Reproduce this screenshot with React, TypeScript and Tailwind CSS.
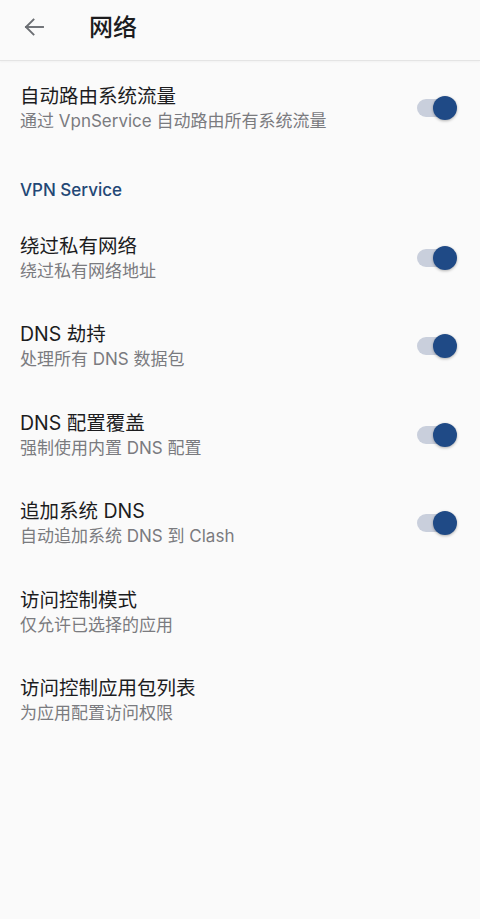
import React from "react";

const font = { fontFamily: 'Inter, "Noto Sans CJK SC", sans-serif' };

function Toggle() {
  return (
    <div className="relative w-[40px] h-[26px] flex items-center shrink-0">
      <div className="absolute left-0 top-[4px] w-[36px] h-[18px] rounded-full bg-[#c9cfdc]" />
      <div className="absolute left-[16px] top-[1px] w-[24px] h-[24px] rounded-full bg-[#1f4a86] shadow-[0_1px_3px_rgba(0,0,0,0.3)]" />
    </div>
  );
}

function Row({ title, sub, toggle }: { title: string; sub: string; toggle?: boolean }) {
  return (
    <div className="h-[88.4px] flex items-center pl-[20px] pr-[23px] pt-[6px]">
      <div className="flex-1 flex flex-col">
        <div className="text-[19.5px] leading-[26px] text-[#1c1c1e]">{title}</div>
        <div className="text-[17px] leading-[24px] text-[#7a7b7f]">{sub}</div>
      </div>
      {toggle && <Toggle />}
    </div>
  );
}

export default function App() {
  return (
    <div className="w-[480px] h-[919px] bg-[#fafafa] overflow-hidden" style={font}>
      <div className="h-[61px] flex items-center border-b border-[#e4e4e4] shadow-[0_1px_2px_rgba(0,0,0,0.04)]">
        <svg className="ml-[22px] mt-[-6px]" width="24" height="24" viewBox="0 0 24 24" fill="none" stroke="#6b6e73" strokeWidth="1.9" strokeLinecap="square">
          <path d="M21 12H4" />
          <path d="M11.5 4.5L4 12L11.5 19.5" />
        </svg>
        <div className="ml-[43px] mt-[-4px] text-[24px] font-medium text-[#1c1c1e]">网络</div>
      </div>
      <Row title="自动路由系统流量" sub="通过 VpnService 自动路由所有系统流量" toggle />
      <div className="h-[61.5px] pl-[20px] pt-[29px]">
        <div className="text-[17px] leading-[24px] font-medium text-[#234775]">VPN Service</div>
      </div>
      <Row title="绕过私有网络" sub="绕过私有网络地址" toggle />
      <Row title="DNS 劫持" sub="处理所有 DNS 数据包" toggle />
      <Row title="DNS 配置覆盖" sub="强制使用内置 DNS 配置" toggle />
      <Row title="追加系统 DNS" sub="自动追加系统 DNS 到 Clash" toggle />
      <Row title="访问控制模式" sub="仅允许已选择的应用" />
      <Row title="访问控制应用包列表" sub="为应用配置访问权限" />
    </div>
  );
}
